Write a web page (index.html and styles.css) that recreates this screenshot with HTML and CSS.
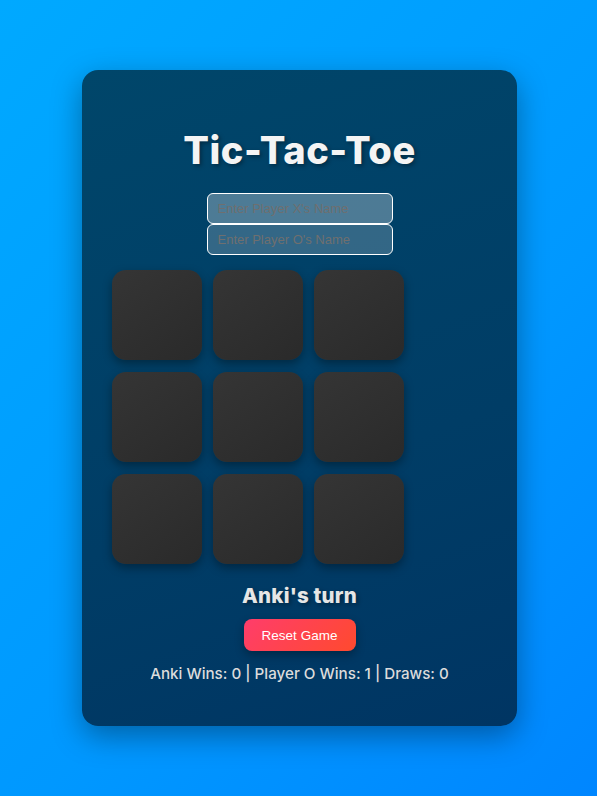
FILE: index.html
```html
<!DOCTYPE html>
<html>
<head>
<meta charset="utf-8">
<title>Tic-Tac-Toe</title>
<link rel="stylesheet" href="styles.css">
</head>
<body>
<div class="card">
  <h1 class="title">Tic-Tac-Toe</h1>
  <div class="inputs">
    <input class="name name-x" type="text" placeholder="Enter Player X's Name">
    <input class="name name-o" type="text" placeholder="Enter Player O's Name">
  </div>
  <div class="board">
    <div class="cell"></div><div class="cell"></div><div class="cell"></div>
    <div class="cell"></div><div class="cell"></div><div class="cell"></div>
    <div class="cell"></div><div class="cell"></div><div class="cell"></div>
  </div>
  <div class="turn">Anki's turn</div>
  <button class="reset">Reset Game</button>
  <div class="scores">Anki Wins: 0 | Player O Wins: 1 | Draws: 0</div>
</div>
</body>
</html>
```
FILE: styles.css
```css
html, body {
  margin: 0;
  padding: 0;
}
body {
  box-sizing: border-box;
  min-height: 100vh;
  padding-left: 2px;
  background: linear-gradient(135deg, #00a9ff 0%, #0098ff 60%, #0086ff 100%);
  display: flex;
  align-items: center;
  justify-content: center;
  font-family: "Inter", "Liberation Sans", sans-serif;
}
.card {
  box-sizing: border-box;
  width: 435px;
  height: 656px;
  padding: 58px 30px 0;
  border-radius: 16px;
  background: linear-gradient(160deg, #00466a 0%, #003d66 60%, #003563 100%);
  box-shadow: 0 10px 30px rgba(0, 0, 0, 0.35);
  display: flex;
  flex-direction: column;
  align-items: center;
}
.title {
  margin: 0;
  height: 44px;
  line-height: 44px;
  font-size: 38px;
  font-weight: 800;
  color: #f4f4f4;
  letter-spacing: 0.6px;
  text-shadow: 2px 2px 4px rgba(0, 0, 0, 0.35);
}
.inputs {
  margin-top: 21px;
  display: flex;
  flex-direction: column;
}
.name {
  box-sizing: border-box;
  width: 186px;
  height: 31px;
  margin: 0;
  padding: 0 10px;
  border: 1px solid #ffffff;
  border-radius: 6px;
  font-family: "Liberation Sans", Arial, sans-serif;
  font-size: 13px;
  color: #333;
  outline: none;
}
.name::placeholder {
  color: #6f6f6f;
}
.name-x {
  background: rgba(255, 255, 255, 0.3);
}
.name-o {
  background: rgba(255, 255, 255, 0.2);
}
.board {
  align-self: flex-start;
  margin-top: 15px;
  display: grid;
  grid-template-columns: repeat(3, 90px);
  grid-auto-rows: 90px;
  gap: 12px 11px;
}
.cell {
  border-radius: 14px;
  background: linear-gradient(145deg, #353535, #2a2a2a);
  box-shadow: 0 4px 10px rgba(0, 0, 0, 0.35);
}
.turn {
  margin-top: 20px;
  height: 24px;
  line-height: 24px;
  font-size: 20.5px;
  font-weight: 800;
  letter-spacing: 0.2px;
  color: #e6e6e6;
  text-shadow: 2px 2px 4px rgba(0, 0, 0, 0.35);
}
.reset {
  margin-top: 11px;
  width: 112px;
  height: 32px;
  border: none;
  border-radius: 8px;
  background: linear-gradient(135deg, #ff3d6b, #ff4a2e);
  color: #ffffff;
  font-family: "Liberation Sans", Arial, sans-serif;
  font-size: 13.5px;
  box-shadow: 0 4px 10px rgba(0, 0, 0, 0.3);
}
.scores {
  margin-top: 13px;
  height: 20px;
  line-height: 20px;
  font-size: 15.2px;
  font-weight: 500;
  color: #dcdcdc;
}
```
